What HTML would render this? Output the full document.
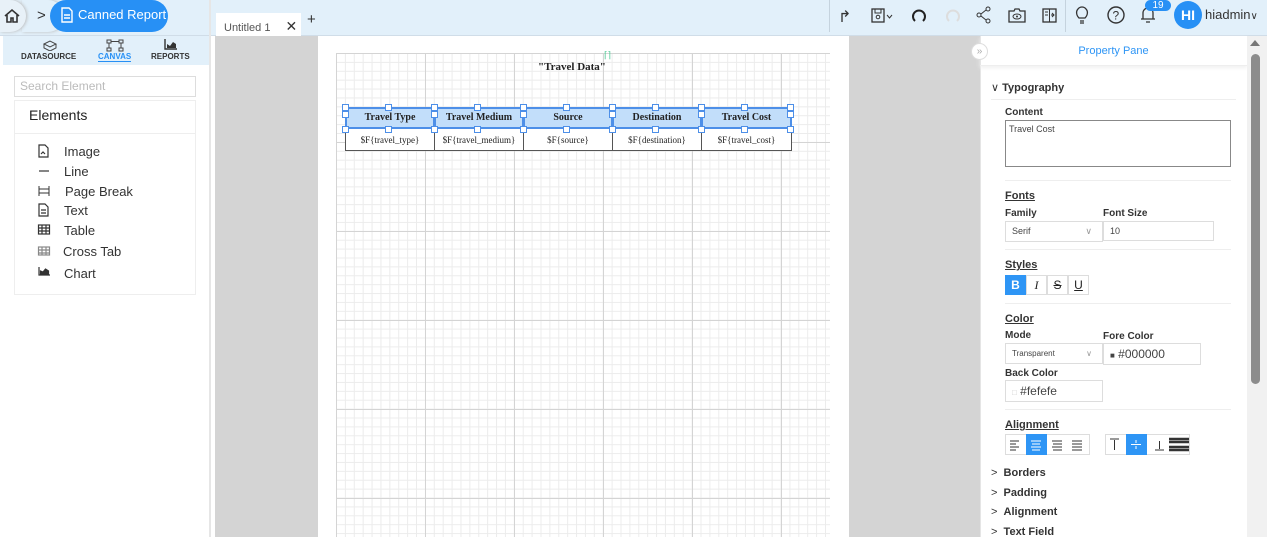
<!DOCTYPE html>
<html><head><meta charset="utf-8"><style>
*{box-sizing:border-box;margin:0;padding:0}
body{width:1267px;height:537px;overflow:hidden;background:#fff;font-family:"Liberation Sans",sans-serif;position:relative;color:#222}
.a{position:absolute}
.hdr{left:0;top:0;width:1267px;height:36px;background:#e2f0fa;border-bottom:1px solid #d0dde8}
.grid{left:336px;top:53px;width:494px;height:484px;
background-image:linear-gradient(#d4d4d4 1px,transparent 1px),linear-gradient(90deg,#d4d4d4 1px,transparent 1px),linear-gradient(#ececec 1px,transparent 1px),linear-gradient(90deg,#ececec 1px,transparent 1px);
background-size:89px 89px,89px 89px,8.9px 8.9px,8.9px 8.9px}
.th{top:107px;height:22px;background:#c2defa;border:2px solid #4d8fe8;font:bold 10px "Liberation Serif",serif;text-align:center;line-height:18px}
.td{top:129px;height:22px;border:1px solid #555;border-top:none;background:#fff;font:9px "Liberation Serif",serif;text-align:center;line-height:22px}
.h{width:7px;height:7px;border:1px solid #4d8fe8;background:#fff}
.lbl{font-size:10px;font-weight:bold;color:#333}
.sec{font-size:11px;font-weight:bold;text-decoration:underline;color:#333}
.inp{border:1px solid #ddd;background:#fff;font-size:9px;color:#444;padding-left:6px}
.el{left:38px;font-size:13px;color:#333}
.btn{width:21px;height:20px;border:1px solid #ddd;background:#fff;text-align:center;font-size:12px;line-height:18px}
.on{background:#2e95f5;color:#fff;border-color:#2e95f5}
.ic{font-size:16px;color:#333;top:7px}
</style></head><body>
<div class="a hdr"></div>
<div class="a" style="left:22px;top:0;width:42px;height:32px;background:#e2f0fa;border-radius:0 16px 16px 0;box-shadow:1px 0 3px #bbb;"></div>
<div class="a" style="left:37px;top:7px;font-size:15px;color:#333">&gt;</div>
<div class="a" style="left:0;top:0;width:26px;height:32px;background:#e8f1f8;border-radius:0 16px 16px 0;box-shadow:1px 0 3px #bbb;"></div>
<svg class="a" style="left:3px;top:7px" width="18" height="18" viewBox="0 0 18 18"><path d="M2 9L9 3l7 6M4 8v7h4v-4h2v4h4V8" fill="none" stroke="#333" stroke-width="1.6"/></svg>
<div class="a" style="left:50px;top:0;width:118px;height:32px;background:#2790f5;border-radius:16px;color:#fff;font-size:13px;line-height:29px;padding-left:28px">Canned Report</div>
<svg class="a" style="left:60px;top:7px" width="14" height="16" viewBox="0 0 14 16"><path d="M2 1h7l3 3v11H2z M4 8h6 M4 11h6" fill="none" stroke="#fff" stroke-width="1.4"/></svg>
<div class="a" style="left:209px;top:0;width:2px;height:537px;background:#e6e6e6"></div>
<div class="a" style="left:216px;top:13px;width:85px;height:23px;background:#fff;font-size:11px;color:#555;padding:5px 0 0 8px">Untitled 1 <span style="margin-left:12px;font-size:14px;color:#333">✕</span></div>
<div class="a" style="left:307px;top:11px;font-size:15px;color:#333">+</div>
<div class="a" style="left:829px;top:0;width:1px;height:32px;background:#c5d3de"></div>
<div class="a" style="left:1065px;top:0;width:1px;height:32px;background:#c5d3de"></div>
<div class="a ic" style="left:838px">↱</div>
<svg class="a" style="left:871px;top:7px" width="26" height="17"><rect x="1" y="2" width="12" height="13" fill="none" stroke="#333" stroke-width="1.3"/><rect x="4" y="2" width="6" height="4" fill="none" stroke="#333"/><circle cx="7" cy="10" r="1.8" fill="none" stroke="#333"/><path d="M16 8l2.5 3 2.5-3" fill="none" stroke="#333"/></svg>
<svg class="a" style="left:911px;top:7px" width="16" height="17"><path d="M4 14A6 6 0 1 1 12 14" fill="none" stroke="#222" stroke-width="2"/></svg>
<svg class="a" style="left:945px;top:7px" width="16" height="17"><path d="M4 14A6 6 0 1 1 12 14" fill="none" stroke="#ddd" stroke-width="2"/></svg>
<svg class="a" style="left:976px;top:6px" width="16" height="18"><circle cx="12" cy="3" r="2" fill="none" stroke="#333"/><circle cx="3" cy="9" r="2" fill="none" stroke="#333"/><circle cx="12" cy="15" r="2" fill="none" stroke="#333"/><path d="M5 8l5-4M5 10l5 4" stroke="#333"/></svg>
<svg class="a" style="left:1008px;top:8px" width="18" height="15"><path d="M1 3h5l1-2h4l1 2h5v11H1z" fill="none" stroke="#333" stroke-width="1.3"/><ellipse cx="9" cy="8.5" rx="4" ry="2.5" fill="none" stroke="#333"/><circle cx="9" cy="8.5" r="1" fill="#333"/></svg>
<svg class="a" style="left:1042px;top:8px" width="15" height="15"><rect x="1" y="1" width="13" height="13" fill="none" stroke="#333" stroke-width="1.3"/><path d="M7.5 1v13M3 4h3M3 7h3M9 7l3 0M10 5l2 2-2 2" stroke="#333" fill="none"/></svg>
<svg class="a" style="left:1075px;top:5px" width="14" height="20"><path d="M4 13C1 10 1 6 3 4a5 5 0 0 1 8 0c2 2 2 6-1 9zM5 16h4M5 18h4" fill="none" stroke="#333" stroke-width="1.3"/></svg>
<svg class="a" style="left:1106px;top:5px" width="20" height="20"><circle cx="10" cy="10" r="8" fill="none" stroke="#333" stroke-width="1.4"/><text x="6.5" y="14.5" font-size="12" font-family="Liberation Sans" fill="#333">?</text></svg>
<svg class="a" style="left:1140px;top:6px" width="16" height="18"><path d="M3 13V7a5 5 0 0 1 10 0v6zM1 13h14M6 16h4" fill="none" stroke="#333" stroke-width="1.3"/></svg>
<div class="a" style="left:1145px;top:0;width:26px;height:11px;background:#2790f5;color:#fff;border-radius:7px;font-size:10px;text-align:center;line-height:11px">19</div>
<div class="a" style="left:1174px;top:1px;width:28px;height:28px;border-radius:50%;background:#2790f5;color:#fff;font-size:14px;font-weight:bold;text-align:center;line-height:28px">HI</div>
<div class="a" style="left:1205px;top:7px;font-size:13px;color:#333">hiadmin<span style="font-size:10px">∨</span></div>

<div class="a" style="left:3px;top:36px;width:206px;height:29px;background:#e2f0fa"></div>
<div class="a" style="left:21px;top:52px;font-size:8px;font-weight:bold;color:#333">DATASOURCE</div>
<div class="a" style="left:98px;top:52px;font-size:8px;font-weight:bold;color:#2790f5;border-bottom:1px solid #2790f5">CANVAS</div>
<div class="a" style="left:151px;top:52px;font-size:8px;font-weight:bold;color:#333">REPORTS</div>
<svg class="a" style="left:43px;top:40px" width="14" height="11"><path d="M1 4l6-3 6 3-6 3zM1 4v4l6 3 6-3V4" fill="none" stroke="#444"/></svg>
<svg class="a" style="left:106px;top:39px" width="18" height="13"><rect x="1" y="1" width="4" height="3" fill="none" stroke="#444"/><rect x="13" y="1" width="4" height="3" fill="none" stroke="#444"/><rect x="1" y="9" width="4" height="3" fill="none" stroke="#444"/><rect x="13" y="9" width="4" height="3" fill="none" stroke="#444"/><path d="M5 2.5h8M3 4v5M15 4v5" stroke="#444"/></svg>
<svg class="a" style="left:164px;top:39px" width="13" height="11"><path d="M1 0v10h12" stroke="#333" fill="none" stroke-width="1.4"/><path d="M3 9V5l3 2 3-4 3 2v4z" fill="#333"/></svg>
<div class="a inp" style="left:14px;top:76px;width:182px;height:21px;font-size:12px;color:#bbb;line-height:19px;padding-left:5px">Search Element</div>
<div class="a" style="left:14px;top:100px;width:182px;height:195px;border:1px solid #eee"></div>
<div class="a" style="left:14px;top:133px;width:182px;height:1px;background:#eee"></div>
<div class="a" style="left:29px;top:107px;font-size:14px;color:#222">Elements</div>
<div class="a el" style="left:64px;top:144px">Image</div>
<div class="a el" style="left:64px;top:164px">Line</div>
<div class="a el" style="left:65px;top:184px">Page Break</div>
<div class="a el" style="left:64px;top:203px">Text</div>
<div class="a el" style="left:64px;top:223px">Table</div>
<div class="a el" style="left:63px;top:244px">Cross Tab</div>
<div class="a el" style="left:64px;top:266px">Chart</div>
<svg class="a" style="left:37px;top:143px" width="16" height="145" fill="none" stroke="#333" stroke-width="1.2">
<path d="M2 2h6l3 3v9H2z M4 11l2-2 2 2"/>
<path d="M2 28h10"/>
<path d="M2 43v10M12 43v10M2 46h10M2 50h10" stroke-width="1"/>
<path d="M2 61h6l3 3v9H2z M4 67h5M4 70h5"/>
<rect x="1.5" y="82" width="11" height="9"/><path d="M1.5 85h11M1.5 88h11M5 82v9M9 82v9"/>
<rect x="1.5" y="104" width="11" height="8" stroke="#888"/><path d="M1.5 107h11M1.5 110h11M5 104v8M9 104v8" stroke="#888"/>
<path d="M2 124v8h11" /><path d="M3.5 131v-3l2.5 1 2.5-3 3 2v3z" fill="#333"/>
</svg>

<div class="a" style="left:215px;top:36px;width:103px;height:501px;background:#d4d4d4"></div>
<div class="a" style="left:849px;top:36px;width:131px;height:501px;background:#d4d4d4"></div>
<div class="a grid"></div>
<div class="a" style="left:538px;top:61px;font:bold 11px 'Liberation Serif',serif">"Travel Data"</div>
<div class="a" style="left:604px;top:50px;font-size:9px;color:#5c9">⌈⌉</div>
<div class="a th" style="left:345px;width:90px">Travel Type</div>
<div class="a th" style="left:434px;width:90px">Travel Medium</div>
<div class="a th" style="left:523px;width:90px">Source</div>
<div class="a th" style="left:612px;width:90px">Destination</div>
<div class="a th" style="left:701px;width:91px">Travel Cost</div>
<div class="a td" style="left:345px;width:90px">$F{travel_type}</div>
<div class="a td" style="left:434px;width:90px">$F{travel_medium}</div>
<div class="a td" style="left:523px;width:90px">$F{source}</div>
<div class="a td" style="left:612px;width:90px">$F{destination}</div>
<div class="a td" style="left:701px;width:91px">$F{travel_cost}</div>
<div class="a" style="left:345px;top:104px;width:450px;height:30px">
<div class="a h" style="left:-3px;top:0"></div><div class="a h" style="left:-3px;top:7px"></div><div class="a h" style="left:-3px;top:22px"></div><div class="a h" style="left:40px;top:0"></div><div class="a h" style="left:40px;top:22px"></div>
<div class="a h" style="left:86px;top:0"></div><div class="a h" style="left:86px;top:7px"></div><div class="a h" style="left:86px;top:22px"></div><div class="a h" style="left:129px;top:0"></div><div class="a h" style="left:129px;top:22px"></div>
<div class="a h" style="left:175px;top:0"></div><div class="a h" style="left:175px;top:7px"></div><div class="a h" style="left:175px;top:22px"></div><div class="a h" style="left:218px;top:0"></div><div class="a h" style="left:218px;top:22px"></div>
<div class="a h" style="left:264px;top:0"></div><div class="a h" style="left:264px;top:7px"></div><div class="a h" style="left:264px;top:22px"></div><div class="a h" style="left:307px;top:0"></div><div class="a h" style="left:307px;top:22px"></div>
<div class="a h" style="left:353px;top:0"></div><div class="a h" style="left:353px;top:7px"></div><div class="a h" style="left:353px;top:22px"></div><div class="a h" style="left:396px;top:0"></div><div class="a h" style="left:396px;top:22px"></div>
<div class="a h" style="left:442px;top:0"></div><div class="a h" style="left:442px;top:7px"></div><div class="a h" style="left:442px;top:22px"></div>
</div>

<div class="a" style="left:980px;top:36px;width:267px;height:501px;background:#fff;border-left:1px solid #e5e5e5"></div>
<div class="a" style="left:980px;top:36px;width:267px;height:30px;border-bottom:1px solid #eee;box-shadow:0 2px 4px #f0f0f0;color:#2e95f5;font-size:11px;text-align:center;line-height:30px">Property Pane</div>
<div class="a" style="left:971px;top:43px;width:17px;height:17px;border-radius:50%;background:#fff;border:1px solid #ddd;font-size:10px;color:#aaa;text-align:center;line-height:15px">»</div>
<div class="a" style="left:1247px;top:36px;width:20px;height:501px;background:#f1f1f1"></div>
<div class="a" style="left:1251px;top:54px;width:9px;height:330px;background:#8c8c8c;border-radius:5px"></div>
<div class="a" style="left:1250px;top:40px;width:0;height:0;border:5px solid transparent;border-bottom:6px solid #777;border-top:none"></div>
<div class="a" style="left:991px;top:81px;font-size:11px;color:#333">∨&nbsp;<b>Typography</b></div>
<div class="a" style="left:991px;top:99px;width:245px;height:1px;background:#eee"></div>
<div class="a lbl" style="left:1005px;top:107px">Content</div>
<div class="a" style="left:1005px;top:120px;width:226px;height:47px;border:1px solid #888;font-size:9px;color:#444;padding:3px">Travel Cost</div>
<div class="a" style="left:1005px;top:180px;width:226px;height:1px;background:#eee"></div>
<div class="a sec" style="left:1005px;top:190px">Fonts</div>
<div class="a lbl" style="left:1005px;top:208px">Family</div>
<div class="a lbl" style="left:1103px;top:208px">Font Size</div>
<div class="a inp" style="left:1005px;top:221px;width:98px;height:21px;line-height:19px">Serif<span style="float:right;margin-right:10px;color:#999">∨</span></div>
<div class="a inp" style="left:1103px;top:221px;width:111px;height:20px;line-height:18px">10</div>
<div class="a" style="left:1005px;top:249px;width:226px;height:1px;background:#eee"></div>
<div class="a sec" style="left:1005px;top:259px">Styles</div>
<div class="a btn on" style="left:1005px;top:275px;font-weight:bold">B</div>
<div class="a btn" style="left:1026px;top:275px;font-style:italic;font-family:'Liberation Serif'">I</div>
<div class="a btn" style="left:1047px;top:275px;text-decoration:line-through">S</div>
<div class="a btn" style="left:1068px;top:275px;text-decoration:underline">U</div>
<div class="a" style="left:1005px;top:303px;width:226px;height:1px;background:#eee"></div>
<div class="a sec" style="left:1005px;top:313px">Color</div>
<div class="a lbl" style="left:1005px;top:330px">Mode</div>
<div class="a lbl" style="left:1103px;top:331px">Fore Color</div>
<div class="a inp" style="left:1005px;top:343px;width:98px;height:21px;font-size:8px;line-height:19px">Transparent<span style="float:right;margin-right:10px;color:#999">∨</span></div>
<div class="a inp" style="left:1103px;top:343px;width:98px;height:22px;font-size:12px;line-height:20px"><span style="font-size:8px">■</span> #000000</div>
<div class="a lbl" style="left:1005px;top:368px">Back Color</div>
<div class="a inp" style="left:1005px;top:380px;width:98px;height:22px;font-size:12px;line-height:20px"><span style="font-size:8px;color:#ccc">□</span> #fefefe</div>
<div class="a" style="left:1005px;top:409px;width:226px;height:1px;background:#eee"></div>
<div class="a sec" style="left:1005px;top:419px">Alignment</div>
<svg class="a" style="left:1005px;top:434px" width="186" height="22">
<g fill="none" stroke="#ddd"><rect x=".5" y=".5" width="84" height="20"/><rect x="100.5" y=".5" width="84" height="20"/></g>
<rect x="21" y="0" width="21" height="21" fill="#2e95f5"/><rect x="121" y="0" width="21" height="21" fill="#2e95f5"/>
<g stroke="#333"><path d="M5 7h9M5 10h6M5 13h9M5 16h6"/><path d="M47 7h10M48 10h9M47 13h10M48 16h9"/><path d="M67 7h10M67 10h10M67 13h10M67 16h10"/><path d="M105 5h9M109.5 6v10M150 16h9M154.5 7v8"/><path d="M164 5h20M164 8h20M164 13h20M164 16h20" stroke-width="2.5"/></g>
<g stroke="#fff"><path d="M26 7h10M27 10h8M26 13h10M27 16h8"/><path d="M126 10.5h10M131 6v3M131 12v3"/></g>
</svg>
<div class="a" style="left:991px;top:464px;font-size:11px;color:#333;line-height:19.5px"><div>&gt;&nbsp;&nbsp;<b>Borders</b></div><div>&gt;&nbsp;&nbsp;<b>Padding</b></div><div>&gt;&nbsp;&nbsp;<b>Alignment</b></div><div>&gt;&nbsp;&nbsp;<b>Text Field</b></div></div>
</body></html>
